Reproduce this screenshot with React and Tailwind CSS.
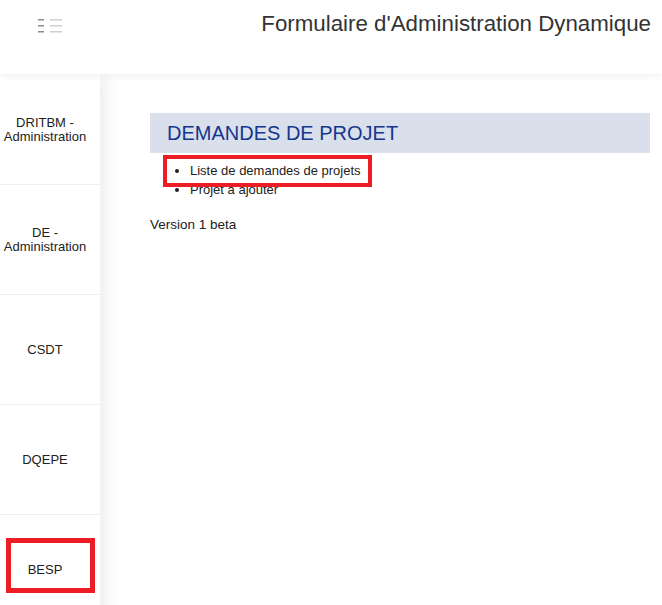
import React from 'react';

const menuItems = [
  ['DRITBM -', 'Administration'],
  ['DE -', 'Administration'],
  ['CSDT'],
  ['DQEPE'],
  ['BESP'],
];

// Menu toggle icon: short dark strokes + long light strokes
function MenuIcon() {
  return (
    <svg width="24" height="16" viewBox="0 0 24 16" className="block">
      {[1, 7, 13].map((y) => (
        <g key={y}>
          <rect x="0" y={y} width="6" height="1.5" fill="#8a8a8a" />
          <rect x="12" y={y} width="12" height="1.5" fill="#cfcfcf" />
        </g>
      ))}
    </svg>
  );
}

export default function App() {
  return (
    <div
      className="w-[662px] h-[605px] overflow-hidden bg-white text-[#333] relative"
      style={{ fontFamily: '"Liberation Sans", Arial, sans-serif' }}
    >
      {/* Header */}
      <header className="h-[74px] flex items-start relative z-20 bg-white shadow-[0_2px_8px_rgba(0,0,0,0.06)]">
        <div className="w-[100px] pt-[18px] pl-[38px]">
          <MenuIcon />
        </div>
        <h1 className="ml-auto pr-[11px] pt-[9px] text-[22.3px] leading-[30px] text-[#333]">
          Formulaire d'Administration Dynamique
        </h1>
      </header>

      <div className="flex">
        {/* Sidebar */}
        <aside className="w-[100px] shrink-0 pt-px bg-white relative z-10 shadow-[4px_0_18px_rgba(0,0,0,0.09)]">
          {menuItems.map((lines, i) => (
            <div
              key={i}
              className="h-[110px] pr-[10px] flex flex-col items-center justify-center border-b border-[#f0f0f0] text-[13px] leading-[14px] text-center text-[#222]"
            >
              {lines.map((l) => (
                <span key={l}>{l}</span>
              ))}
            </div>
          ))}
          {/* annotation box */}
          <div className="absolute left-[6px] top-[464px] w-[89px] h-[55px] border-[5px] border-[#ee1c25]" />
        </aside>

        {/* Main */}
        <main className="flex-1 pl-[50px] pt-[39px] text-[13px] text-[#222]">
          <div className="w-[500px] h-[40px] bg-[#d9e0ec] flex items-center pl-[17px]">
            <h2 className="text-[20px] text-[#14368f]">DEMANDES DE PROJET</h2>
          </div>
          <div className="relative">
            <ul className="list-disc pl-[40px] pt-[8px] leading-[19px]">
              <li>Liste de demandes de projets</li>
              <li>Projet à ajouter</li>
            </ul>
            {/* annotation box */}
            <div className="absolute left-[13px] top-[2px] w-[209px] h-[32px] border-[4px] border-[#ee1c25]" />
          </div>
          <p className="mt-[16px] text-[13.5px]">Version 1 beta</p>
        </main>
      </div>
    </div>
  );
}
